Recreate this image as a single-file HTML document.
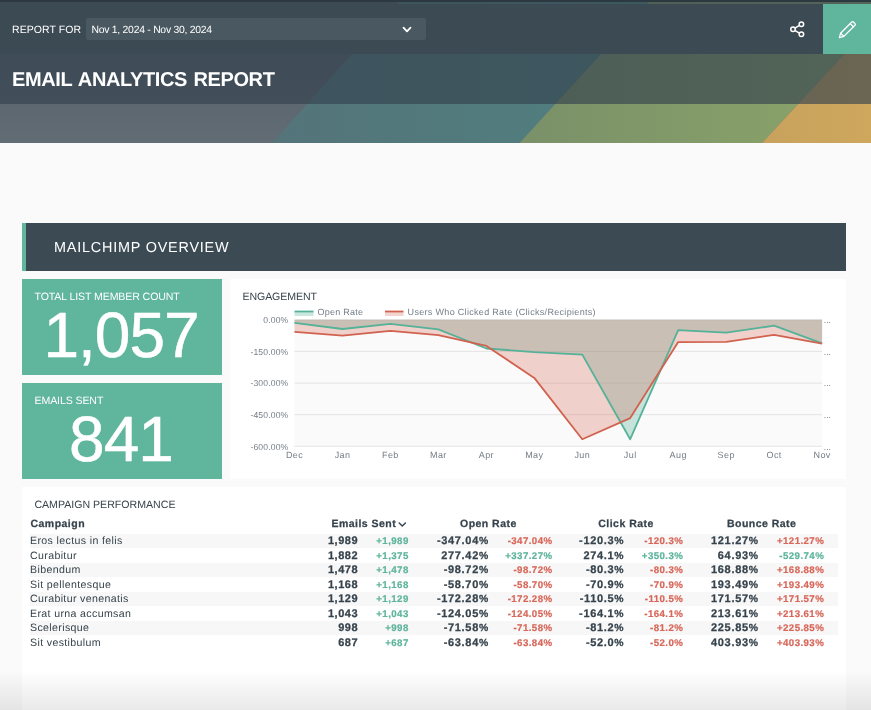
<!DOCTYPE html>
<html lang="en">
<head>
<meta charset="utf-8">
<title>Email Analytics Report</title>
<style>
*{box-sizing:border-box;margin:0;padding:0}
html,body{text-rendering:geometricPrecision;width:871px;height:710px;overflow:hidden;background:#fafafa;font-family:"Liberation Sans",sans-serif;color:#36434c}
#wrap{position:absolute;left:0;top:0;width:871px;height:710px;overflow:hidden;will-change:transform;transform:translateZ(0)}
.abs{position:absolute}
#hdr{position:absolute;left:0;top:0;width:871px;height:143px;overflow:hidden;background:#5c6870}
#hdr svg.bg{position:absolute;left:0;top:0}
#titleband{position:absolute;left:0;top:0;width:871px;height:104px;background:rgba(52,65,78,0.644)}
#topline{position:absolute;left:0;top:0;width:871px;height:1.8px;background:#2d3940}
#topbar{position:absolute;left:0;top:4px;width:871px;height:50px;background:#3c4a53}
#editbtn{position:absolute;left:823px;top:4px;width:48px;height:50px;background:#60b59d}
#rf{position:absolute;left:12px;top:23.4px;font-size:10.5px;line-height:14px;color:#fff;letter-spacing:0.08px;white-space:nowrap}
#sel{position:absolute;left:86px;top:18px;width:339.5px;height:22px;background:#4a5961;border-radius:2px}
#seltxt{position:absolute;left:91.5px;top:23.6px;font-size:10.4px;line-height:14px;color:#fff;white-space:nowrap;letter-spacing:-0.26px}
#title{position:absolute;left:12.1px;top:68.2px;font-size:20px;line-height:24px;font-weight:bold;color:#fff;letter-spacing:-0.4px;word-spacing:1.5px;white-space:nowrap}
#sec{position:absolute;left:22px;top:222.5px;width:824px;height:48px;background:#3b4a53;border-left:4px solid #60b59d}
#sec span{position:absolute;left:28px;top:16px;font-size:14.4px;line-height:18px;color:#fff;letter-spacing:0.8px;white-space:nowrap}
.kpi{position:absolute;left:22px;width:200px;height:96px;background:#60b59d;color:#fff}
.kpi .lb{position:absolute;left:12.5px;top:11.3px;font-size:10.6px;line-height:14px;letter-spacing:-0.12px;white-space:nowrap}
.kpi .num{position:absolute;left:0;width:200px;top:20.4px;text-align:center;font-size:64px;line-height:72px;white-space:nowrap;letter-spacing:-1px;text-indent:-2px;-webkit-text-stroke:0.5px #fff}
.panel{position:absolute;background:#fff}
.ptitle{position:absolute;font-size:10.6px;line-height:14px;letter-spacing:-0.1px;color:#36434c;white-space:nowrap}
svg.chart{position:absolute;left:0;top:0}
.th{position:absolute;top:517.2px;-webkit-text-stroke:0.25px #36434c;font-size:10.5px;line-height:14px;font-weight:bold;color:#36434c;white-space:nowrap;letter-spacing:0.47px}
.row{position:absolute;left:30px;width:808px;height:14.5px;font-size:10.6px;line-height:14.5px;white-space:nowrap}
.row.odd{background:#f7f7f7}
.row span{position:absolute;top:0}
.row .nm{left:0;top:0.5px;letter-spacing:0.36px;color:#36434c}
.row .v{-webkit-text-stroke:0.25px #36434c;font-weight:bold;font-size:11px;color:#36434c;letter-spacing:0.5px;top:0.6px}
.row .v.p{letter-spacing:0.68px}
.row .v i{font-style:normal;font-size:10.4px;letter-spacing:0}
.row .d{font-weight:bold;font-size:9.7px;letter-spacing:0.42px;top:1.4px}
.row .g{color:#5db49b;-webkit-text-stroke:0.2px #5db49b}
.row .r{color:#d8675a;-webkit-text-stroke:0.2px #d8675a}
#fade{position:absolute;left:0;top:670px;width:871px;height:40px;background:linear-gradient(to bottom,rgba(0,0,0,0),rgba(0,0,0,0.085))}
</style>
</head>
<body>
<div id="wrap">
<div id="hdr">
  <svg class="bg" width="871" height="143" viewBox="0 0 871 143">
    <defs>
      <linearGradient id="gg" x1="0" y1="0" x2="0" y2="1"><stop offset="0" stop-color="#4f5b64"/><stop offset="1" stop-color="#616c74"/></linearGradient>
      <linearGradient id="gt" x1="0" y1="0" x2="1" y2="0"><stop offset="0" stop-color="#54747a"/><stop offset="1" stop-color="#50807f"/></linearGradient>
      <linearGradient id="go" x1="0" y1="0" x2="1" y2="0"><stop offset="0" stop-color="#7a9069"/><stop offset="1" stop-color="#8ca769"/></linearGradient>
      <linearGradient id="gy" x1="0" y1="0" x2="1" y2="0"><stop offset="0" stop-color="#c8a25d"/><stop offset="1" stop-color="#d6ac5c"/></linearGradient>
    </defs>
    <rect x="0" y="0" width="871" height="143" fill="url(#gg)"/>
    <polygon points="272,143 400.5,0 650.5,0 519.5,143" fill="url(#gt)"/>
    <polygon points="519.5,143 650.5,0 894,0 762,143" fill="url(#go)"/>
    <polygon points="762,143 894,0 1000,0 1000,143" fill="url(#gy)"/>
  </svg>
  <div id="titleband"></div>
  <div id="topline"></div>
  <div id="topbar"></div>
  <div id="editbtn"></div>
  <div id="rf">REPORT FOR</div>
  <div id="sel"></div>
  <div id="seltxt">Nov 1, 2024 - Nov 30, 2024</div>
  <svg class="abs" style="left:401px;top:25.1px" width="12" height="10" viewBox="0 0 12 10"><polyline points="2.5,2.6 6,6.3 9.5,2.6" fill="none" stroke="#fff" stroke-width="1.8" stroke-linecap="round" stroke-linejoin="round"/></svg>
  <!-- share icon -->
  <svg class="abs" style="left:788px;top:19px" width="20" height="20" viewBox="0 0 20 20">
    <g fill="none" stroke="#fff" stroke-width="1.5">
      <line x1="5" y1="10.3" x2="13" y2="5.4"/><line x1="5" y1="10.3" x2="13" y2="15.2"/>
      <circle cx="5" cy="10.3" r="2.25" fill="#3c4a53"/><circle cx="13.4" cy="5.2" r="2.25" fill="#3c4a53"/><circle cx="13.4" cy="15.2" r="2.25" fill="#3c4a53"/>
    </g>
  </svg>
  <!-- pencil icon -->
  <svg class="abs" style="left:837px;top:19px" width="22" height="22" viewBox="0 0 22 22">
    <g fill="none" stroke="#fff" stroke-width="1.3" stroke-linejoin="round" stroke-linecap="round">
      <path d="M2.4 18.6 L3.6 14.2 L14.8 3 Q15.6 2.2 16.4 3 L18 4.6 Q18.8 5.4 18 6.2 L6.8 17.4 Z"/>
      <line x1="13.2" y1="4.6" x2="16.4" y2="7.8"/>
      <line x1="3.6" y1="14.2" x2="6.8" y2="17.4"/>
    </g>
  </svg>
  <div id="title">EMAIL ANALYTICS REPORT</div>
</div>

<div id="sec"><span>MAILCHIMP OVERVIEW</span></div>

<div class="kpi" style="top:279px"><div class="lb">TOTAL LIST MEMBER COUNT</div><div class="num">1,057</div></div>
<div class="kpi" style="top:383px;height:95.5px"><div class="lb">EMAILS SENT</div><div class="num">841</div></div>

<div class="panel" style="left:230px;top:278.7px;width:616px;height:199.9px"></div>
<div class="ptitle" style="left:242.5px;top:289.9px">ENGAGEMENT</div>
<svg class="chart" width="871" height="710" viewBox="0 0 871 710">
<rect x="294.5" y="319.8" width="527.6" height="126.5" fill="#fafafa"/>
<line x1="294.5" x2="822.1" y1="319.8" y2="319.8" stroke="#e3e3e3" stroke-width="1"/>
<line x1="294.5" x2="822.1" y1="351.4" y2="351.4" stroke="#e3e3e3" stroke-width="1"/>
<line x1="294.5" x2="822.1" y1="383.1" y2="383.1" stroke="#e3e3e3" stroke-width="1"/>
<line x1="294.5" x2="822.1" y1="414.7" y2="414.7" stroke="#e3e3e3" stroke-width="1"/>
<line x1="294.5" x2="822.1" y1="446.3" y2="446.3" stroke="#e3e3e3" stroke-width="1"/>
<polygon points="294.5,319.8 294.5,322.8 342.5,329.0 390.4,323.9 438.4,329.4 486.4,348.5 534.3,352.1 582.3,354.6 630.2,439.2 678.2,330.1 726.2,332.7 774.1,325.7 822.1,343.3 822.1,319.8" fill="#4fae94" fill-opacity="0.30"/>
<polygon points="294.5,319.8 294.5,331.9 342.5,335.6 390.4,330.8 438.4,335.2 486.4,345.9 534.3,377.9 582.3,439.2 630.2,418.1 678.2,342.1 726.2,341.9 774.1,334.9 822.1,343.7 822.1,319.8" fill="#d3614d" fill-opacity="0.27"/>
<polyline points="294.5,322.8 342.5,329.0 390.4,323.9 438.4,329.4 486.4,348.5 534.3,352.1 582.3,354.6 630.2,439.2 678.2,330.1 726.2,332.7 774.1,325.7 822.1,343.3" fill="none" stroke="#55b198" stroke-width="1.8" stroke-linejoin="round"/>
<polyline points="294.5,331.9 342.5,335.6 390.4,330.8 438.4,335.2 486.4,345.9 534.3,377.9 582.3,439.2 630.2,418.1 678.2,342.1 726.2,341.9 774.1,334.9 822.1,343.7" fill="none" stroke="#d1624f" stroke-width="1.8" stroke-linejoin="round"/>
<rect x="294.5" y="312" width="19" height="4" fill="#4fae94" fill-opacity="0.3"/>
<line x1="294.5" x2="313.5" y1="311.5" y2="311.5" stroke="#55b198" stroke-width="1.8"/>
<rect x="385" y="312" width="18.5" height="4" fill="#d3614d" fill-opacity="0.27"/>
<line x1="385" x2="403.5" y1="311.5" y2="311.5" stroke="#d1624f" stroke-width="1.8"/>
<g font-family="'Liberation Sans', sans-serif" fill="#737e87">
<text x="317.6" y="315" font-size="9" textLength="45.5" lengthAdjust="spacing">Open Rate</text>
<text x="407.6" y="315" font-size="9" textLength="188" lengthAdjust="spacing">Users Who Clicked Rate (Clicks/Recipients)</text>
<text x="288.4" y="323.0" font-size="8.6" text-anchor="end" letter-spacing="0.15">0.00%</text>
<text x="823.8" y="323.1" font-size="8.6">...</text>
<text x="288.4" y="354.6" font-size="8.6" text-anchor="end" letter-spacing="0.15">-150.00%</text>
<text x="823.8" y="354.7" font-size="8.6">...</text>
<text x="288.4" y="386.2" font-size="8.6" text-anchor="end" letter-spacing="0.15">-300.00%</text>
<text x="823.8" y="386.4" font-size="8.6">...</text>
<text x="288.4" y="417.9" font-size="8.6" text-anchor="end" letter-spacing="0.15">-450.00%</text>
<text x="823.8" y="418.0" font-size="8.6">...</text>
<text x="288.4" y="449.5" font-size="8.6" text-anchor="end" letter-spacing="0.15">-600.00%</text>
<text x="823.8" y="449.6" font-size="8.6">...</text>
<text x="294.5" y="458.1" font-size="9" text-anchor="middle" letter-spacing="0.4">Dec</text>
<text x="342.5" y="458.1" font-size="9" text-anchor="middle" letter-spacing="0.4">Jan</text>
<text x="390.4" y="458.1" font-size="9" text-anchor="middle" letter-spacing="0.4">Feb</text>
<text x="438.4" y="458.1" font-size="9" text-anchor="middle" letter-spacing="0.4">Mar</text>
<text x="486.4" y="458.1" font-size="9" text-anchor="middle" letter-spacing="0.4">Apr</text>
<text x="534.3" y="458.1" font-size="9" text-anchor="middle" letter-spacing="0.4">May</text>
<text x="582.3" y="458.1" font-size="9" text-anchor="middle" letter-spacing="0.4">Jun</text>
<text x="630.2" y="458.1" font-size="9" text-anchor="middle" letter-spacing="0.4">Jul</text>
<text x="678.2" y="458.1" font-size="9" text-anchor="middle" letter-spacing="0.4">Aug</text>
<text x="726.2" y="458.1" font-size="9" text-anchor="middle" letter-spacing="0.4">Sep</text>
<text x="774.1" y="458.1" font-size="9" text-anchor="middle" letter-spacing="0.4">Oct</text>
<text x="822.1" y="458.1" font-size="9" text-anchor="middle" letter-spacing="0.4">Nov</text>
</g>
</svg>

<div class="panel" style="left:22px;top:486.8px;width:824px;height:224px"></div>
<div class="ptitle" style="left:34.4px;top:498.2px;letter-spacing:0">CAMPAIGN PERFORMANCE</div>
<div class="th" style="left:30.5px">Campaign</div>
<div class="th" style="left:331.5px">Emails Sent</div>
<svg class="abs" style="left:397.2px;top:519.6px" width="11" height="9" viewBox="0 0 11 9"><polyline points="2.2,2.9 5.3,6 8.4,2.9" fill="none" stroke="#36434c" stroke-width="1.4" stroke-linecap="round" stroke-linejoin="round"/></svg>
<div class="th" style="left:460px">Open Rate</div>
<div class="th" style="left:598.3px">Click Rate</div>
<div class="th" style="left:727px">Bounce Rate</div>
<div class="row odd" style="top:533.8px"><span class="nm">Eros lectus in felis</span><span class="v" style="right:480.0px">1,989</span><span class="d g" style="right:429.3px">+1,989</span><span class="v p" style="right:349.8px">-347.04<i>%</i></span><span class="d r" style="right:285.5px">-347.04%</span><span class="v p" style="right:214.4px">-120.3<i>%</i></span><span class="d r" style="right:154.7px">-120.3%</span><span class="v p" style="right:80.0px">121.27<i>%</i></span><span class="d r" style="right:13.8px">+121.27%</span></div>
<div class="row" style="top:548.3px"><span class="nm">Curabitur</span><span class="v" style="right:480.0px">1,882</span><span class="d g" style="right:429.3px">+1,375</span><span class="v p" style="right:349.8px">277.42<i>%</i></span><span class="d g" style="right:285.5px">+337.27%</span><span class="v p" style="right:214.4px">274.1<i>%</i></span><span class="d g" style="right:154.7px">+350.3%</span><span class="v p" style="right:80.0px">64.93<i>%</i></span><span class="d g" style="right:13.8px">-529.74%</span></div>
<div class="row odd" style="top:562.8px"><span class="nm">Bibendum</span><span class="v" style="right:480.0px">1,478</span><span class="d g" style="right:429.3px">+1,478</span><span class="v p" style="right:349.8px">-98.72<i>%</i></span><span class="d r" style="right:285.5px">-98.72%</span><span class="v p" style="right:214.4px">-80.3<i>%</i></span><span class="d r" style="right:154.7px">-80.3%</span><span class="v p" style="right:80.0px">168.88<i>%</i></span><span class="d r" style="right:13.8px">+168.88%</span></div>
<div class="row" style="top:577.3px"><span class="nm">Sit pellentesque</span><span class="v" style="right:480.0px">1,168</span><span class="d g" style="right:429.3px">+1,168</span><span class="v p" style="right:349.8px">-58.70<i>%</i></span><span class="d r" style="right:285.5px">-58.70%</span><span class="v p" style="right:214.4px">-70.9<i>%</i></span><span class="d r" style="right:154.7px">-70.9%</span><span class="v p" style="right:80.0px">193.49<i>%</i></span><span class="d r" style="right:13.8px">+193.49%</span></div>
<div class="row odd" style="top:591.8px"><span class="nm">Curabitur venenatis</span><span class="v" style="right:480.0px">1,129</span><span class="d g" style="right:429.3px">+1,129</span><span class="v p" style="right:349.8px">-172.28<i>%</i></span><span class="d r" style="right:285.5px">-172.28%</span><span class="v p" style="right:214.4px">-110.5<i>%</i></span><span class="d r" style="right:154.7px">-110.5%</span><span class="v p" style="right:80.0px">171.57<i>%</i></span><span class="d r" style="right:13.8px">+171.57%</span></div>
<div class="row" style="top:606.3px"><span class="nm">Erat urna accumsan</span><span class="v" style="right:480.0px">1,043</span><span class="d g" style="right:429.3px">+1,043</span><span class="v p" style="right:349.8px">-124.05<i>%</i></span><span class="d r" style="right:285.5px">-124.05%</span><span class="v p" style="right:214.4px">-164.1<i>%</i></span><span class="d r" style="right:154.7px">-164.1%</span><span class="v p" style="right:80.0px">213.61<i>%</i></span><span class="d r" style="right:13.8px">+213.61%</span></div>
<div class="row odd" style="top:620.8px"><span class="nm">Scelerisque</span><span class="v" style="right:480.0px">998</span><span class="d g" style="right:429.3px">+998</span><span class="v p" style="right:349.8px">-71.58<i>%</i></span><span class="d r" style="right:285.5px">-71.58%</span><span class="v p" style="right:214.4px">-81.2<i>%</i></span><span class="d r" style="right:154.7px">-81.2%</span><span class="v p" style="right:80.0px">225.85<i>%</i></span><span class="d r" style="right:13.8px">+225.85%</span></div>
<div class="row" style="top:635.3px"><span class="nm">Sit vestibulum</span><span class="v" style="right:480.0px">687</span><span class="d g" style="right:429.3px">+687</span><span class="v p" style="right:349.8px">-63.84<i>%</i></span><span class="d r" style="right:285.5px">-63.84%</span><span class="v p" style="right:214.4px">-52.0<i>%</i></span><span class="d r" style="right:154.7px">-52.0%</span><span class="v p" style="right:80.0px">403.93<i>%</i></span><span class="d r" style="right:13.8px">+403.93%</span></div>
<div id="fade"></div>
</div>
</body>
</html>
